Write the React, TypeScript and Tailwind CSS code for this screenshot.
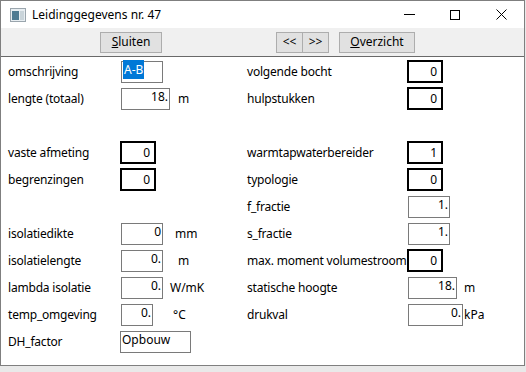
import React from "react";

type Field = {
  label: string;
  kind: "thin" | "thick";
  value: string;
  box?: string;
  unit?: string;
  unitCls?: string;
  leftText?: boolean;
  selected?: boolean;
};

type Row = { left?: Field; right?: Field };

const rows: Row[] = [
  {
    left: { label: "omschrijving", kind: "thin", value: "A-B", box: "w-[42px]", leftText: true, selected: true },
    right: { label: "volgende bocht", kind: "thick", value: "0" },
  },
  {
    left: { label: "lengte (totaal)", kind: "thin", value: "18.", box: "w-[49px]", unit: "m", unitCls: "ml-[8px]" },
    right: { label: "hulpstukken", kind: "thick", value: "0" },
  },
  {},
  {
    left: { label: "vaste afmeting", kind: "thick", value: "0" },
    right: { label: "warmtapwaterbereider", kind: "thick", value: "1" },
  },
  {
    left: { label: "begrenzingen", kind: "thick", value: "0" },
    right: { label: "typologie", kind: "thick", value: "0" },
  },
  {
    right: { label: "f_fractie", kind: "thin", value: "1.", box: "w-[42px]" },
  },
  {
    left: { label: "isolatiedikte", kind: "thin", value: "0", box: "w-[42px]", unit: "mm", unitCls: "ml-[12px]" },
    right: { label: "s_fractie", kind: "thin", value: "1.", box: "w-[42px]" },
  },
  {
    left: { label: "isolatielengte", kind: "thin", value: "0.", box: "w-[42px]", unit: "m", unitCls: "ml-[15px]" },
    right: { label: "max. moment volumestroom", kind: "thick", value: "0" },
  },
  {
    left: { label: "lambda isolatie", kind: "thin", value: "0.", box: "w-[42px]", unit: "W/mK", unitCls: "ml-[7px]" },
    right: { label: "statische hoogte", kind: "thin", value: "18.", box: "w-[49px]", unit: "m", unitCls: "ml-[7px]" },
  },
  {
    left: { label: "temp_omgeving", kind: "thin", value: "0.", box: "w-[32px]", unit: "°C", unitCls: "ml-[20px]" },
    right: { label: "drukval", kind: "thin", value: "0.", box: "w-[55px]", unit: "kPa", unitCls: "ml-[1px]" },
  },
  {
    left: { label: "DH_factor", kind: "thin", value: "Opbouw", box: "w-[71px] -ml-[1px]", leftText: true },
  },
];

const Box = ({ f }: { f: Field }) => {
  if (f.kind === "thick") {
    return (
      <div className="-ml-[1px] flex h-[23px] w-[36px] items-center justify-end border-2 border-black bg-white pr-[4px] leading-none">
        {f.value}
      </div>
    );
  }
  return (
    <div
      className={`h-[22px] border border-[#7a7a7a] bg-white leading-[15px] ${f.box} ${
        f.leftText ? "pl-[1px] text-left" : "pr-[1px] text-right"
      }`}
    >
      {f.selected ? <span className="bg-[#0078d7] px-[1px] py-[1px] text-white">{f.value}</span> : f.value}
    </div>
  );
};

const Cell = ({ f, labelCls }: { f?: Field; labelCls: string }) => {
  if (!f) return null;
  return (
    <div className="flex items-center">
      <div className={`shrink-0 whitespace-nowrap tracking-[-0.2px] ${labelCls}`}>{f.label}</div>
      <Box f={f} />
      {f.unit && <div className={`whitespace-nowrap ${f.unitCls}`}>{f.unit}</div>}
    </div>
  );
};

const ToolButton = ({ children, cls }: { children: React.ReactNode; cls: string }) => (
  <div
    className={`flex h-[21px] items-center justify-center border border-[#adadad] bg-[#e1e1e1] text-[12px] ${cls}`}
  >
    {children}
  </div>
);

export default function App() {
  return (
    <div
      className="h-[372px] w-[526px] overflow-hidden bg-[#e9e9e9] text-[12px] text-black"
      style={{ fontFamily: '"Noto Sans", "Open Sans", sans-serif' }}
    >
      <div className="flex h-[366px] w-[525px] flex-col border border-[#7f7f7f] bg-white">
        {/* title bar */}
        <div className="flex h-[27px] items-center">
          <svg width="16" height="14" viewBox="0 0 16 14" className="ml-[9px]">
            <rect x="0.5" y="0.5" width="15" height="13" fill="#e8eef2" stroke="#9aa5ad" />
            <rect x="2" y="3" width="7" height="9" fill="#4f7b92" />
            <rect x="10" y="3" width="4" height="9" fill="#c9d4da" />
          </svg>
          <div className="ml-[6px] text-[12px]">Leidinggegevens nr. 47</div>
          <div className="ml-auto flex h-full">
            <div className="flex w-[46px] items-center justify-center">
              <div className="h-px w-[11px] bg-black" />
            </div>
            <div className="flex w-[46px] items-center justify-center">
              <div className="h-[10px] w-[10px] border border-black" />
            </div>
            <div className="flex w-[46px] items-center justify-center">
              <svg width="11" height="11" viewBox="0 0 11 11">
                <path d="M0.5 0.5 L10.5 10.5 M10.5 0.5 L0.5 10.5" stroke="#000" strokeWidth="1" />
              </svg>
            </div>
          </div>
        </div>

        {/* toolbar */}
        <div className="flex h-[29px] items-center border-b border-[#696969] bg-[#f0f0f0]">
          <ToolButton cls="ml-[99px] w-[62px]">
            <span>
              <span className="underline">S</span>luiten
            </span>
          </ToolButton>
          <ToolButton cls="ml-[114px] w-[27px] text-[11px]">&lt;&lt;</ToolButton>
          <ToolButton cls="-ml-[1px] w-[27px] text-[11px]">&gt;&gt;</ToolButton>
          <ToolButton cls="ml-[10px] w-[76px]">
            <span>
              <span className="underline">O</span>verzicht
            </span>
          </ToolButton>
        </div>

        {/* form */}
        <div className="flex flex-col pt-[1px]">
          {rows.map((r, i) => (
            <div key={i} className="flex h-[27px] items-center">
              <div className="w-[246px] pl-[7px]">
                <Cell f={r.left} labelCls="w-[113px]" />
              </div>
              <div>
                <Cell f={r.right} labelCls="w-[161px]" />
              </div>
            </div>
          ))}
        </div>
      </div>
    </div>
  );
}
